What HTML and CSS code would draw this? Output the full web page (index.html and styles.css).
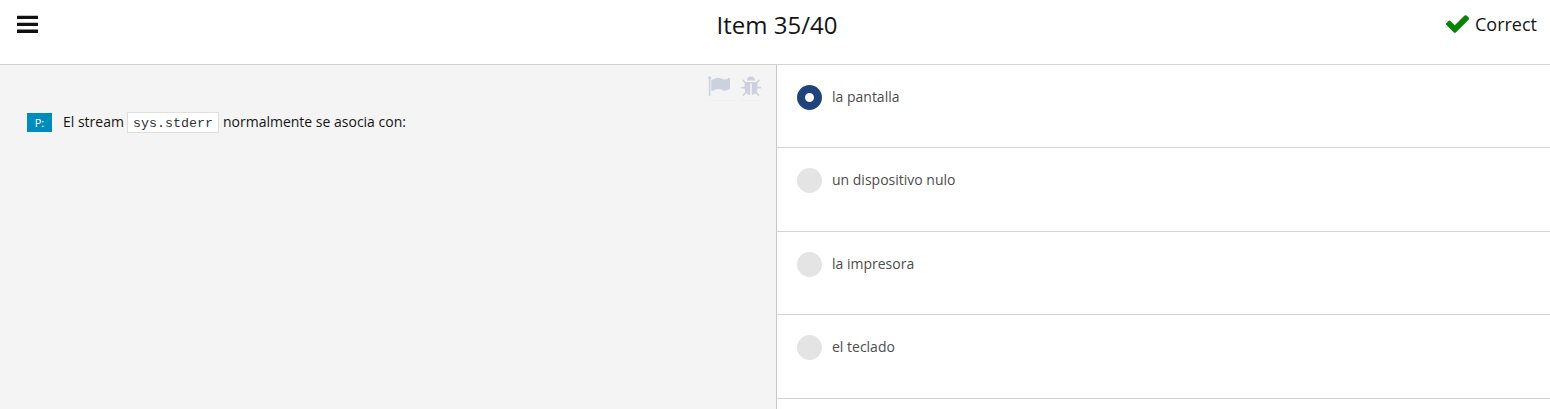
FILE: index.html
```html
<!DOCTYPE html>
<html lang="es">
<head>
<meta charset="utf-8">
<title>Item 35/40</title>
<link rel="stylesheet" href="styles.css">
</head>
<body>
<header class="header">
  <svg class="menu" viewBox="0 0 21 18"><rect y="0.7" width="21" height="3.3" rx=".3"/><rect y="7.7" width="21" height="3.3" rx=".3"/><rect y="14.5" width="21" height="3.5" rx=".3"/></svg>
  <h1 class="title">Item 35/40</h1>
  <div class="status">
    <svg class="check" viewBox="121 334 1550 1188"><path d="M1671 566q0 40-28 68l-724 724-136 136q-28 28-68 28t-68-28l-136-136-362-362q-28-28-28-68t28-68l136-136q28-28 68-28t68 28l294 295 656-657q28-28 68-28t68 28l136 136q28 28 28 68z"/></svg>
    <span>Correct</span>
  </div>
</header>
<main class="main">
  <section class="question">
    <div class="tools">
      <span class="tool flag"><svg viewBox="64 128 1728 1536"><path d="M320 256q0 72-64 110v1266q0 13-9.500 22.500t-22.500 9.500h-64q-13 0-22.500-9.500t-9.500-22.500v-1266q-64-38-64-110 0-53 37.500-90.500t90.500-37.500 90.500 37.500 37.500 90.500zm1472 64v763q0 25-12.500 38.500t-39.500 27.500q-215 116-369 116-61 0-123.500-22t-108.500-48-115.500-48-142.500-22q-192 0-464 146-17 9-33 9-26 0-45-19t-19-45v-742q0-32 31-55 21-14 79-43 236-120 421-120 107 0 200 29t219 88q38 19 88 19 54 0 117.500-21t110-47 88-47 54.500-21q26 0 45 19t19 45z"/></svg></span>
      <span class="tool bug"><svg viewBox="96 64 1600 1540"><path d="M1696 960q0 26-19 45t-45 19h-224q0 171-67 290l208 209q19 19 19 45t-19 45q-18 19-45 19t-45-19l-198-197q-5 5-15 13t-42 28.500-65 36.500-82 29-97 13v-896h-128v896q-51 0-101.500-13.500t-87-33-66-39-43.500-32.500l-15-14-183 207q-20 21-48 21-24 0-43-16-19-18-20.500-44.500t15.500-46.500l202-227q-58-114-58-274h-224q-26 0-45-19t-19-45 19-45 45-19h224v-294l-173-173q-19-19-19-45t19-45 45-19 45 19l173 173h844l173-173q19-19 45-19t45 19 19 45-19 45l-173 173v294h224q26 0 45 19t19 45zm-480-576h-640q0-133 93.500-226.500t226.500-93.500 226.500 93.500 93.500 226.500z"/></svg></span>
    </div>
    <div class="prompt">
      <span class="label">P:</span>
      <span class="before">El stream</span>
      <code class="code">sys.stderr</code>
      <span class="after">normalmente se asocia con:</span>
    </div>
  </section>
  <section class="answers">
    <div class="answer selected"><span class="radio"></span><span class="text">la pantalla</span></div>
    <div class="answer tall"><span class="radio"></span><span class="text">un dispositivo nulo</span></div>
    <div class="answer"><span class="radio"></span><span class="text">la impresora</span></div>
    <div class="answer tall"><span class="radio"></span><span class="text">el teclado</span></div>
  </section>
</main>
</body>
</html>
```
FILE: styles.css
```css
* { box-sizing: border-box; }
body {
  margin: 0;
  height: 409px;
  overflow: hidden;
  display: flex;
  flex-direction: column;
  background: #fff;
  color: #151515;
  font-family: "Open Sans", sans-serif;
  font-size: 14px;
}
svg { display: block; }
.header {
  flex: none;
  height: 65px;
  border-bottom: 1px solid #d3d3d0;
  display: grid;
  grid-template-columns: 1fr auto 1fr;
  align-items: start;
  padding: 0 13px 0 17px;
}
.menu { width: 21px; height: 18px; margin-top: 15px; fill: #111; }
.title {
  margin: 8px 0 0;
  font-size: 24px;
  line-height: 34px;
  font-weight: 400;
}
.status {
  display: flex;
  justify-content: flex-end;
  gap: 6px;
  font-size: 18px;
  line-height: 26px;
  padding-top: 11px;
}
.check { width: 23px; height: 18px; margin-top: 4px; fill: #078307; }
.main { flex: 1; display: flex; min-height: 0; }
.question {
  width: 777px;
  background: #f4f4f4;
  border-right: 1px solid #c9c9c6;
}
.tools {
  display: flex;
  justify-content: flex-end;
  gap: 6px;
  padding: 11px 15px 0 0;
}
.tool { height: 25px; border-bottom: 1px dotted #e9ecf1; fill: #cbd2de; }
.flag { width: 27px; }
.flag svg { width: 22px; height: 20px; }
.bug { width: 20px; }
.bug svg { width: 20px; height: 20px; }
.prompt {
  display: flex;
  align-items: flex-start;
  padding: 11px 0 0 27px;
  line-height: 20px;
}
.label {
  width: 25px;
  height: 19px;
  margin: 1px 11px 0 0;
  background: #008cba;
  color: #fff;
  font-size: 11px;
  line-height: 20px;
  text-align: center;
}
.code {
  width: 92px;
  height: 21px;
  margin: 0 4px 0 3px;
  border: 1px solid #dfdfdf;
  background: #fff;
  color: #333;
  font: 13.33px/21px "Liberation Mono", monospace;
  text-align: center;
}
.answers { flex: 1; color: #4d4d4d; }
.answer {
  height: 83px;
  display: flex;
  gap: 10px;
  padding: 20px 20px 0;
  border-bottom: 1px solid #d3d3d0;
}
.tall { height: 84px; }
.radio {
  width: 25px;
  height: 25px;
  border-radius: 50%;
  background: #e4e4e4;
}
.selected .radio { border: 8.5px solid #204479; background: #fff; }
.text { line-height: 24px; }
```
